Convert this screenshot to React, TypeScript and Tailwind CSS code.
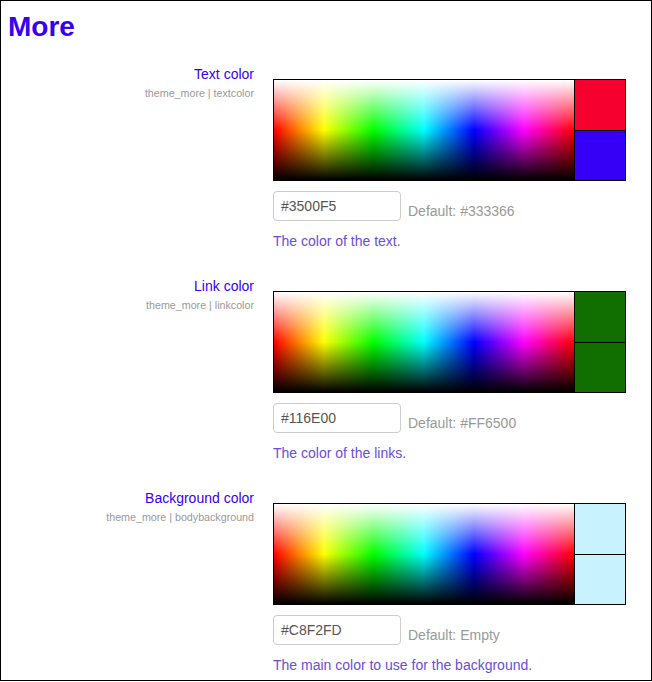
import React from 'react'

interface Setting {
  label: string
  key: string
  value: string
  previous: string
  fallback: string
  help: string
}

const SETTINGS: Setting[] = [
  {
    label: 'Text color',
    key: 'theme_more | textcolor',
    value: '#3500F5',
    previous: '#F5002F',
    fallback: 'Default: #333366',
    help: 'The color of the text.',
  },
  {
    label: 'Link color',
    key: 'theme_more | linkcolor',
    value: '#116E00',
    previous: '#116E00',
    fallback: 'Default: #FF6500',
    help: 'The color of the links.',
  },
  {
    label: 'Background color',
    key: 'theme_more | bodybackground',
    value: '#C8F2FD',
    previous: '#C8F2FD',
    fallback: 'Default: Empty',
    help: 'The main color to use for the background.',
  },
]

// hue across, white fading in from the top, black from the bottom
const SPECTRUM =
  'bg-[linear-gradient(to_bottom,#fff_0%,rgba(255,255,255,0)_50%,rgba(0,0,0,0)_50%,#000_100%),linear-gradient(to_right,#f00_0%,#ff0_16.66%,#0f0_33.33%,#0ff_50%,#00f_66.66%,#f0f_83.33%,#f00_100%)]'

function Picker({ value, previous }: { value: string; previous: string }) {
  return (
    <div className="flex w-[353px] h-[102px] border border-black">
      <div className={`w-[300px] h-full ${SPECTRUM}`} />
      <div className="flex flex-col w-[51px] border-l border-black">
        <div className="h-[51px] border-b border-black" style={{ backgroundColor: previous }} />
        <div className="flex-1" style={{ backgroundColor: value }} />
      </div>
    </div>
  )
}

function SettingRow({ s }: { s: Setting }) {
  return (
    <div className="flex">
      <div className="w-[253px] shrink-0 text-right">
        <div className="text-[14px] leading-4 text-[#3500F5]">{s.label}</div>
        <div className="mt-[5px] text-[10.7px] leading-[13px] text-[#999]">{s.key}</div>
      </div>
      <div className="ml-[19px] pt-[13px]">
        <Picker value={s.value} previous={s.previous} />
        <div className="flex items-end mt-[10px]">
          <input
            readOnly
            value={s.value}
            className="w-[128px] h-[30px] px-[7px] border border-[#ccc] rounded-[4px] text-[14px] text-[#555] outline-none font-['Liberation_Sans',Arial,sans-serif]"
          />
          <span className="ml-[7px] mb-[2px] text-[14px] leading-4 text-[#999]">{s.fallback}</span>
        </div>
        <div className="mt-[12px] text-[14px] leading-4 text-[#6a4ddc]">{s.help}</div>
      </div>
    </div>
  )
}

export default function App() {
  return (
    <div className="w-[652px] h-[681px] border border-black bg-white overflow-hidden font-['Liberation_Sans',Arial,sans-serif]">
      <h1 className="pt-[10px] pl-[7px] text-[28px] leading-8 font-bold text-[#3500F5]">More</h1>
      <div className="flex flex-col gap-[29px] mt-[23px]">
        {SETTINGS.map((s) => (
          <SettingRow key={s.key} s={s} />
        ))}
      </div>
    </div>
  )
}
